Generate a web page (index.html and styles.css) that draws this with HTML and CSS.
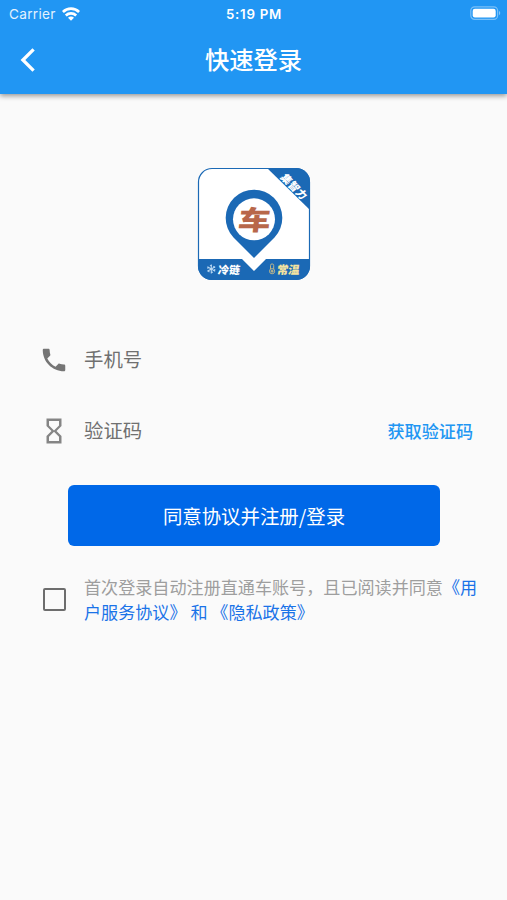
FILE: index.html
```html
<!DOCTYPE html>
<html lang="zh-CN">
<head>
    <meta charset="UTF-8">
    <meta name="viewport" content="width=device-width, initial-scale=1.0">
    <title>快速登录</title>
    <link rel="stylesheet" href="styles.css">
</head>
<body>
    <header class="header">
        <div class="status">
            <div class="carrier">
                <span>Carrier</span>
                <svg class="wifi" width="18" height="14" viewBox="0 0 18 14" fill="none" stroke="#fff" stroke-width="2.7">
                    <path d="M0.9 5C5.5 0.5 12.5 0.5 17.1 5"/>
                    <path d="M3.8 8.4C6.8 5.6 11.2 5.6 14.2 8.4"/>
                    <path d="M9 13.8L6 10.8C7.6 9.2 10.4 9.2 12 10.8Z" fill="#fff" stroke="none"/>
                </svg>
            </div>
            <div class="time">5:19 PM</div>
            <svg class="battery" width="31" height="15" viewBox="0 0 31 15">
                <rect x="0.8" y="0.8" width="26.8" height="12.6" rx="3.8" fill="none" stroke="#fff" stroke-opacity="0.4" stroke-width="1.2"/>
                <rect x="2.7" y="2.7" width="23" height="8.8" rx="2.2" fill="#fff"/>
                <path d="M29 5V9.2C30.7 8.5 30.7 5.7 29 5Z" fill="#fff" fill-opacity="0.45"/>
            </svg>
        </div>
        <div class="bar">
            <button class="back-btn" aria-label="返回">
                <svg width="16" height="26" viewBox="0 0 16 26" fill="none" stroke="#fff" stroke-width="3.3"><path d="M13.6 2.3L2.9 13L13.6 23.7"/></svg>
            </button>
            <h1 class="title">快速登录</h1>
        </div>
    </header>

    <main class="container">
        <svg class="logo" width="114" height="114" viewBox="0 0 114 114">
            <defs>
                <clipPath id="card"><rect x="1" y="1" width="112" height="112" rx="14"/></clipPath>
            </defs>
            <g clip-path="url(#card)">
                <rect width="114" height="114" fill="#fff"/>
                <path d="M69 0H114V44Z" fill="#1b69b5"/>
                <path d="M0 92H45L57 104L69 92H114V114H0Z" fill="#1b69b5"/>
            </g>
            <rect x="1.5" y="1.5" width="111" height="111" rx="13.5" fill="none" stroke="#1b69b5" stroke-width="1.2"/>
            <!-- map pin -->
            <path d="M57 91L36.500 70.500A28.300 28.300 0 1 1 77.500 70.500Z" fill="#1b69b5"/>
            <circle cx="57" cy="52.300" r="21" fill="#fff"/>
            <text class="pin-text" transform="translate(56.500 62.500) skewX(-6) scale(1.120 0.930)" text-anchor="middle">车</text>
            <text class="corner-text" transform="translate(94 22) rotate(45) skewX(-8)" text-anchor="middle">集智力</text>
            <g stroke="#b9d8f2" stroke-width="1.1" fill="none">
                <path d="M14.300 97.500V106.500M10.400 99.800L18.200 104.200M10.400 104.200L18.200 99.800"/>
                <circle cx="14.300" cy="102" r="3.500" stroke-dasharray="1.800 1.860"/>
            </g>
            <text class="cold-text" transform="translate(20.500 106.500) skewX(-8)">冷链</text>
            <g stroke="#b9b58c" stroke-width="1" fill="none">
                <path d="M73.500 102V98.500A1.600 1.600 0 0 1 76.700 98.500V102"/>
                <circle cx="75.100" cy="104.200" r="2.600"/>
                <circle cx="75.100" cy="104.200" r="1" fill="#b9b58c"/>
            </g>
            <text class="warm-text" transform="translate(79.500 106.500) skewX(-8)">常温</text>
        </svg>

        <form class="login">
            <div class="field">
                <svg class="icon" width="30" height="30" viewBox="0 0 24 24" fill="#757575"><path d="M6.620 10.790c1.440 2.830 3.760 5.140 6.590 6.590l2.200-2.200c.27-.27.67-.36 1.020-.24 1.120.37 2.330.57 3.570.57.55 0 1 .45 1 1V20c0 .55-.45 1-1 1-9.390 0-17-7.610-17-17 0-.55.45-1 1-1h3.500c.55 0 1 .45 1 1 0 1.250.2 2.450.57 3.570.11.35.03.74-.25 1.020l-2.200 2.200z"/></svg>
                <label>手机号</label>
            </div>
            <div class="field">
                <svg class="icon" width="30" height="30" viewBox="0 0 24 24" fill="#858585"><path d="M6 2v6h.01L6 8.010 10 12l-4 4 .01.010H6V22h12v-5.990h-.01L18 16l-4-4 4-3.990-.01-.01H18V2H6zm10 14.500V20H8v-3.500l4-4 4 4zm-4-5l-4-4V4h8v3.500l-4 4z"/></svg>
                <label>验证码</label>
                <button type="button" class="code-btn">获取验证码</button>
            </div>
            <button type="button" class="login-btn">同意协议并注册/登录</button>
            <div class="agree">
                <span class="checkbox" role="checkbox" aria-checked="false"></span>
                <div class="terms">
                    <div>首次登录自动注册直通车账号，且已阅读并同意<span class="link">《用</span></div>
                    <div class="link">户服务协议》 和 《隐私政策》</div>
                </div>
            </div>
        </form>
    </main>
</body>
</html>
```
FILE: styles.css
```css
* {
    box-sizing: border-box;
}
body {
    margin: 0;
    min-height: 900px;
    background-color: #fafafa;
    font-family: "Noto Sans CJK SC", sans-serif;
}
button {
    font-family: inherit;
    border: none;
    padding: 0;
    background: none;
    cursor: pointer;
}
.header {
    height: 94px;
    background: #2196f3;
    color: #fff;
    box-shadow: 0 2px 5px rgba(0, 0, 0, 0.4);
}
.status {
    display: grid;
    grid-template-columns: 1fr auto 1fr;
    align-items: center;
    height: 27px;
    padding: 0 6px 0 9px;
    font-family: Inter, sans-serif;
    font-size: 13.6px;
}
.carrier {
    display: flex;
    align-items: center;
    gap: 6px;
    color: #e3f2fe;
    letter-spacing: 0.3px;
}
.time {
    font-weight: 600;
    letter-spacing: 0.75px;
    font-size: 13.3px;
    margin-right: 2px;
}
.battery {
    justify-self: end;
}
.bar {
    display: grid;
    grid-template-columns: 56px 1fr 56px;
    align-items: center;
    height: 65px;
}
.back-btn {
    display: flex;
    justify-content: center;
}
.title {
    margin: 0 0 2px;
    text-align: center;
    font-size: 24.3px;
    font-weight: 500;
    line-height: 36px;
}
.container {
    display: flex;
    flex-direction: column;
    align-items: center;
    padding-top: 73px;
}
.logo text {
    font-weight: 900;
}
.pin-text {
    font-size: 29px;
    font-weight: 700;
    fill: #b8674a;
}
.corner-text {
    font-size: 10.5px;
    fill: #fff;
}
.cold-text {
    font-size: 11px;
    fill: #fff;
}
.warm-text {
    font-size: 11.3px;
    fill: #f3e3a0;
}
.login {
    display: flex;
    flex-direction: column;
    width: 100%;
    padding: 43px 26px 0 39px;
}
.field {
    display: flex;
    align-items: center;
    height: 71px;
    color: #707070;
    font-size: 19.4px;
}
.field label {
    margin-bottom: 2px;
}
.icon {
    margin-right: 15px;
}
.code-btn {
    margin: 0 8px 0 auto;
    color: #2196f3;
    font-size: 17.1px;
    font-weight: 500;
}
.login-btn {
    height: 61px;
    margin: 19px 41px 0 29px;
    border-radius: 6px;
    background: #0068e8;
    color: #fff;
    font-size: 19.4px;
}
.agree {
    display: flex;
    align-items: center;
    margin-top: 29px;
}
.checkbox {
    flex: none;
    width: 23px;
    height: 23px;
    margin: 0 18px 0 4px;
    border: 2.5px solid #6d6d6d;
    border-radius: 2px;
}
.terms {
    color: #9e9e9e;
    font-size: 17.1px;
    line-height: 24.5px;
    white-space: nowrap;
}
.link {
    color: #1a73e8;
}
```
